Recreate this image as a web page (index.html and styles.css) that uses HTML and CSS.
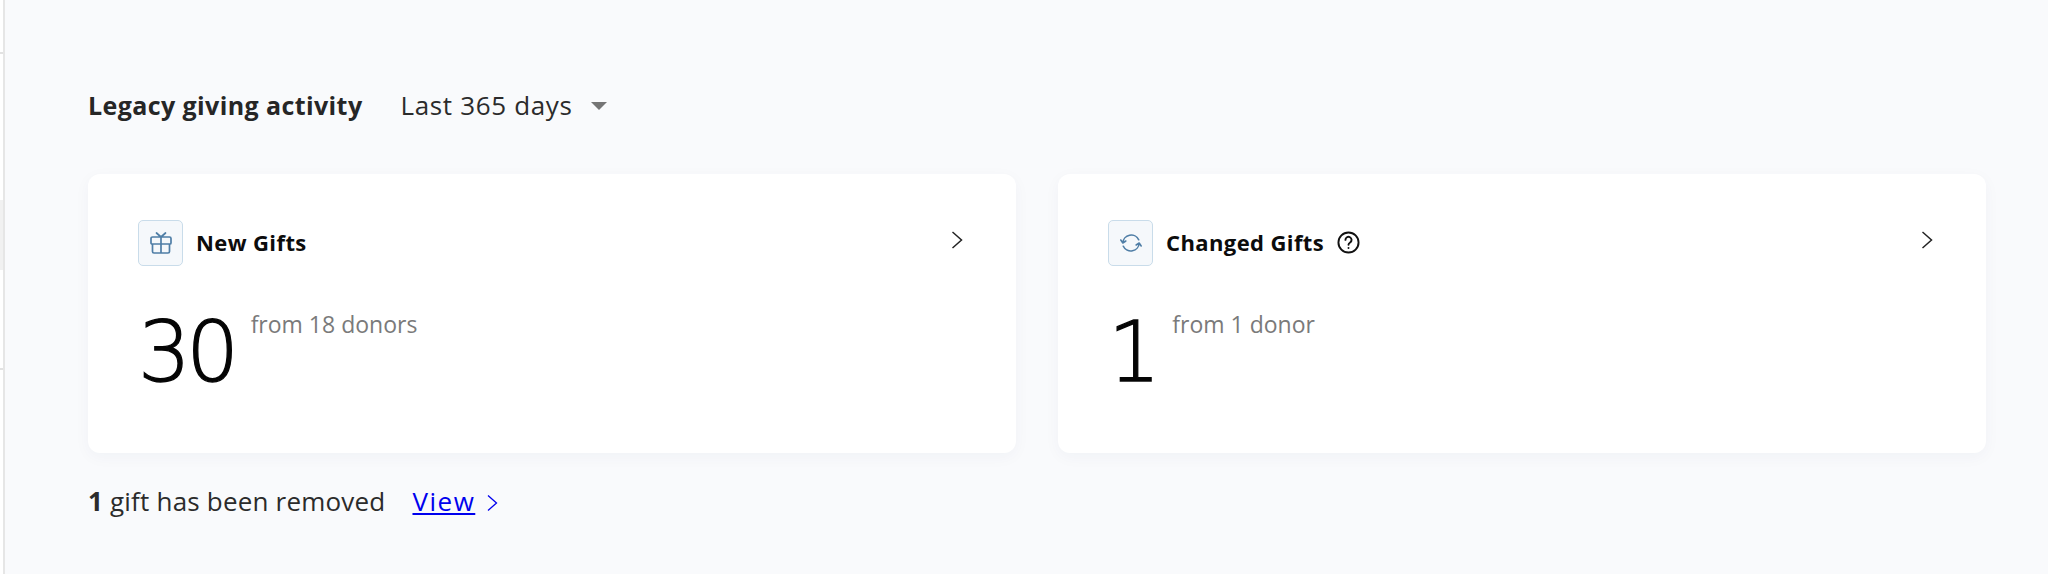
FILE: index.html
```html
<!DOCTYPE html>
<html lang="en">
<head>
<meta charset="utf-8">
<title>Legacy giving activity</title>
<link rel="stylesheet" href="styles.css">
</head>
<body>
<div class="page">
  <aside class="rail">
    <div class="rail-line rail-line-a"></div>
    <div class="rail-block"></div>
    <div class="rail-line rail-line-b"></div>
  </aside>
  <main class="main">
    <header class="heading">
      <h1 class="heading-title">Legacy giving activity</h1>
      <div class="range"><span>Last 365 days</span><span class="caret"></span></div>
    </header>
    <section class="cards">
      <article class="card">
        <div class="card-head">
          <span class="icon-box">
            <svg width="22" height="22" viewBox="0 0 22 22" fill="none" stroke="#4f7ea6" stroke-width="1.700" stroke-linejoin="round" stroke-linecap="round"><path d="M2.500 5h17a1.500 1.500 0 0 1 1.500 1.500V11a1 1 0 0 1-1 1H2a1 1 0 0 1-1-1V6.500A1.500 1.500 0 0 1 2.500 5zM2.500 12v7.500a1.500 1.500 0 0 0 1.500 1.500h14a1.500 1.500 0 0 0 1.500-1.500V12M11 5v16M11 5L6.500 1M11 5l4.500-4"/></svg>
          </span>
          <h2 class="card-title">New Gifts</h2>
          <svg class="chevron" width="12" height="18" viewBox="0 0 12 18" fill="none" stroke="#222" stroke-width="1.500"><path d="M1.500 1l9 8-9 8"/></svg>
        </div>
        <div class="stat"><span class="stat-value">30</span><span class="stat-note">from 18 donors</span></div>
      </article>
      <article class="card">
        <div class="card-head">
          <span class="icon-box">
            <svg width="22" height="20" viewBox="0 0 24 22" fill="none" stroke="#4f7ea6" stroke-width="1.700" stroke-linecap="round" stroke-linejoin="round"><path d="M3 11A9.200 9.200 0 0 1 20.500 7.500M21 11A9.200 9.200 0 0 1 3.500 14.500M.8 7.700L3 11l3.300-2.200M23.200 14.300L21 11l-3.300 2.200"/></svg>
          </span>
          <h2 class="card-title">Changed Gifts</h2>
          <svg class="help" width="23" height="23" viewBox="0 0 24 24" fill="none" stroke="#111" stroke-width="2" stroke-linecap="round"><circle cx="12" cy="12" r="10.500"/><path d="M8.800 9.300a3.200 3.200 0 1 1 4.900 2.700c-1.100.7-1.700 1.200-1.700 2.300M12 17.600v.1"/></svg>
          <svg class="chevron" width="12" height="18" viewBox="0 0 12 18" fill="none" stroke="#222" stroke-width="1.500"><path d="M1.500 1l9 8-9 8"/></svg>
        </div>
        <div class="stat"><span class="stat-value">1</span><span class="stat-note">from 1 donor</span></div>
      </article>
    </section>
    <p class="removed">
      <span><b>1</b> gift has been removed</span>
      <a class="view-link" href="#">View</a>
      <svg class="view-chevron" width="11" height="18" viewBox="0 0 11 18" fill="none" stroke="#0000ee" stroke-width="1.300"><path d="M1 1.500l8.500 7.500L1 16.500"/></svg>
    </p>
  </main>
</div>
</body>
</html>
```

FILE: styles.css
```css
* { box-sizing: border-box; }

html, body {
  margin: 0;
  height: 100%;
}

body {
  background: #f9fafc;
  color: #262626;
  font-family: "Open Sans", "Noto Sans", sans-serif;
  overflow: hidden;
}

.page {
  display: flex;
  height: 574px;
}

.rail {
  flex: none;
  width: 5px;
  background: #fff;
  border-right: 2px solid #e6e6e6;
  padding-top: 52px;
}

.rail-line {
  height: 2px;
  background: #e2e2e2;
}

.rail-block {
  height: 70px;
  margin-top: 146px;
  background: #f1f1f1;
}

.rail-line-b { margin-top: 98px; }

.main {
  flex: 1;
  padding: 88px 62px 0 83px;
}

.heading {
  display: flex;
  align-items: center;
  height: 34px;
}

.heading-title {
  margin: 0;
  font-size: 25px;
  font-weight: 700;
  letter-spacing: 0.4px;
  color: #262626;
}

.range {
  display: flex;
  align-items: center;
  margin-left: 38px;
  font-size: 26px;
  letter-spacing: 0.65px;
  color: #2b2b2b;
}

.caret {
  width: 0;
  height: 0;
  margin-left: 18px;
  margin-top: 2px;
  border-left: 8px solid transparent;
  border-right: 8px solid transparent;
  border-top: 8px solid #757575;
}

.cards {
  display: flex;
  gap: 42px;
  margin-top: 52px;
}

.card {
  flex: 1;
  height: 279px;
  padding: 46px 50px 0;
  background: #fff;
  border-radius: 12px;
  box-shadow: 0 4px 16px rgba(30, 60, 110, 0.04);
}

.card-head {
  display: flex;
  align-items: center;
  height: 46px;
}

.icon-box {
  flex: none;
  display: flex;
  align-items: center;
  justify-content: center;
  width: 45px;
  height: 46px;
  background: #f5f8fb;
  border: 1.500px solid #c9dcea;
  border-radius: 5px;
}

.card-title {
  margin: -2px 0 0 13px;
  font-size: 22px;
  font-weight: 700;
  letter-spacing: 0.4px;
  color: #0c0c0c;
}

.help { margin-left: 13px; margin-top: -2px; }

.chevron {
  margin-left: auto;
  margin-right: 3px;
  margin-top: -6px;
}

.stat {
  display: flex;
  align-items: flex-start;
  margin-top: 34px;
}

.stat-value {
  margin-top: 3px;
  font-family: "DejaVu Sans", sans-serif;
  font-weight: 200;
  font-size: 83px;
  line-height: 100px;
  letter-spacing: -4.500px;
  -webkit-text-stroke: 1.300px #050505;
  color: #050505;
}

.stat-note {
  margin-left: 16px;
  margin-top: 9px;
  font-size: 23px;
  line-height: 30px;
  color: #7a7a7a;
}

.removed {
  display: flex;
  align-items: center;
  margin: 31px 0 0;
  font-size: 26px;
  line-height: 34px;
  letter-spacing: 0.2px;
  color: #2b2b2b;
}

.removed b { font-weight: 700; }

.view-link {
  margin-left: 27px;
  letter-spacing: 1.500px;
  color: #0000ee;
}

.view-chevron { margin-left: 12px; margin-top: 3px; }
```
